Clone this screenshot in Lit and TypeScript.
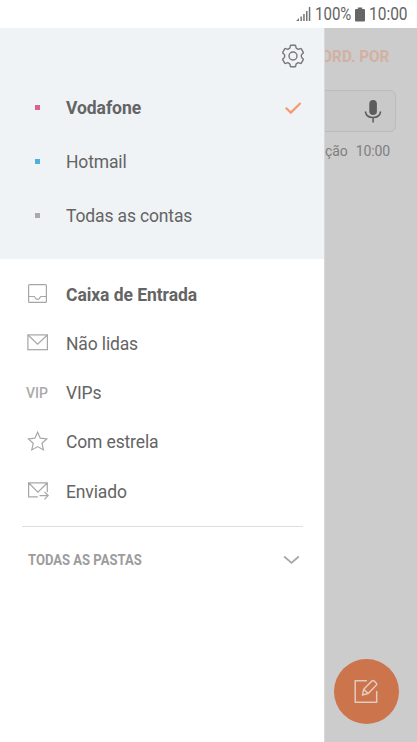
import { LitElement, html, css, svg } from "lit";
import { customElement } from "lit/decorators.js";

const accounts = [
  { name: "Vodafone", tone: "pink", selected: true },
  { name: "Hotmail", tone: "blue", selected: false },
  { name: "Todas as contas", tone: "grey", selected: false },
];

const icons = {
  inbox: svg`<rect x="3.6" y="3.6" width="17.8" height="17.8" rx="1"/><path d="M3.6 15.500h5.500c1 0 .9 2.800 3.400 2.800s2.400-2.800 3.400-2.800h5.500"/>`,
  mail: svg`<rect x="2.9" y="4.9" width="19.5" height="14.8"/><path d="M3 5l9.6 9.2L22.3 5"/>`,
  star: svg`<path d="M12.6 3.2l2.7 6 6.5.7-4.8 4.4 1.4 6.6-5.8-3.3-5.8 3.3 1.4-6.6-4.8-4.4 6.5-.7z"/>`,
  sent: svg`<path d="M12.8 18.9H3.6V4.8h18.7v9.4M3.8 5l9.1 9.1L22.2 5M14.5 17.6h8.6M19.4 13.8l3.8 3.8-3.8 3.8"/>`,
};

const folders = [
  { name: "Caixa de Entrada", icon: icons.inbox, selected: true },
  { name: "Não lidas", icon: icons.mail },
  { name: "VIPs", icon: null },
  { name: "Com estrela", icon: icons.star },
  { name: "Enviado", icon: icons.sent },
];

@customElement("status-bar")
export class StatusBar extends LitElement {
  static styles = css`
    :host {
      display: flex;
      justify-content: flex-end;
      align-items: center;
      height: 28px;
      padding-right: 9px;
      box-sizing: border-box;
      background: #fff;
      color: #646464;
      font-size: 17.5px;
      line-height: 28px;
    }
    .signal { width: 15px; height: 14px; margin-right: 4px; }
    .battery { width: 10px; height: 15px; margin: 0 4px 0 3px; }
    .fit { display: block; width: 39px; white-space: nowrap; }
    .fit span { display: inline-block; transform-origin: 0 50%; transform: scaleX(0.885); }
    .percent { width: 37px; }
    .percent span { transform: scaleX(0.86); }
  `;
  render() {
    return html`
      <svg class="signal" viewBox="0 0 15 14" fill="#757575">
        <path d="M0 14l3-3v3zM4.4 9.5h1.5V14H4.4zM7.2 7h1.5v7H7.2zM10 4h1.5v10H10zM12.8 0h1.5v14h-1.5z" />
      </svg>
      <div class="fit percent"><span>100%</span></div>
      <svg class="battery" viewBox="0 0 10 15" fill="#666">
        <path d="M2.8 .5h4.4v1.5H9q1 0 1 1V13.5q0 1-1 1H1q-1 0-1-1V3q0-1 1-1h1.8z" />
      </svg>
      <div class="fit"><span>10:00</span></div>
    `;
  }
}

@customElement("mail-page")
export class MailPage extends LitElement {
  static styles = css`
    :host {
      display: flex;
      flex-direction: column;
      align-items: flex-end;
      background: #ccc;
      color: #7f7f7f;
    }
    .sort {
      margin: 17px 28px 0 0;
      height: 22px;
      line-height: 22px;
      font-size: 17px;
      font-weight: 700;
      color: #d2b1a2;
      white-space: nowrap;
      transform-origin: 100% 50%;
      transform: scaleX(0.9);
    }
    .search {
      display: flex;
      justify-content: flex-end;
      align-items: center;
      box-sizing: border-box;
      width: 375px;
      height: 42px;
      margin: 23px 21px 0 0;
      padding-right: 13px;
      border: 1px solid #bbb;
      border-radius: 6px;
      background: #c9c9c9;
    }
    .search svg { width: 18px; height: 24px; }
    .sync {
      display: flex;
      gap: 8px;
      margin: 9px 27px 0 0;
      font-size: 14px;
      line-height: 20px;
      letter-spacing: -0.1px;
      white-space: nowrap;
    }
    .compose {
      position: absolute;
      right: 18.5px;
      bottom: 18.5px;
      display: flex;
      align-items: center;
      justify-content: center;
      width: 65px;
      height: 65px;
      border-radius: 50%;
      background: #cc744b;
    }
    .compose svg { width: 26px; height: 26px; }
  `;
  render() {
    return html`
      <div class="sort">ORD. POR</div>
      <div class="search">
        <svg viewBox="0 0 18 24" fill="none" stroke="#5c5c5c" stroke-width="1.5">
          <rect x="5.3" y="1" width="7.6" height="15" rx="3.8" fill="#5c5c5c" stroke="none" />
          <path d="M1.3 12.5C2 16.3 5 18.5 9 18.5s7-2.2 7.7-6M9.1 18.5V23.5" />
        </svg>
      </div>
      <div class="sync"><span>Última sincronização</span><span>10:00</span></div>
      <div class="compose">
        <svg viewBox="0 0 26 26" fill="none" stroke="#e3cabe" stroke-width="1.5" stroke-linejoin="round">
          <path d="M14 2.8H2.2v21.5h21.5V13" />
          <path d="M9.5 17l1.2-5.8 8.3-8.3q1-.9 2 0l2.4 2.3q.9.9 0 1.900l-8.200 8.500zM10.700 11.200l4.500 4.400" />
        </svg>
      </div>
    `;
  }
}

@customElement("mail-drawer")
export class MailDrawer extends LitElement {
  static styles = css`
    :host {
      display: block;
      background: #fff;
      color: #646464;
      font-size: 17.5px;
      box-shadow: 1px 0 0 #d8d8d8;
    }
    svg { display: block; fill: none; }
    .accounts { height: 231px; background: #eff3f6; }
    .settings {
      display: flex;
      justify-content: flex-end;
      height: 53px;
      box-sizing: border-box;
      padding: 16px 19px 0 0;
    }
    .settings svg { width: 24px; height: 24px; }
    .row {
      display: grid;
      grid-template-columns: 41px 1fr auto;
      align-items: center;
      height: 54px;
      padding: 0 22px 0 25px;
    }
    .folders { padding-top: 11px; }
    .folders .row { height: 49.25px; }
    .label { white-space: nowrap; letter-spacing: -0.14px; }
    .selected .label { font-weight: 700; letter-spacing: -0.06px; }
    .dot { width: 5px; height: 5px; margin-left: 10px; position: relative; top: -1px; }
    .pink { background: #de5f8b; }
    .blue { background: #4eb1dc; }
    .grey { background: #aaa; }
    .check { width: 18px; height: 14px; }
    .icon { width: 25px; height: 25px; margin-bottom: 2px; stroke: #a6a6a6; stroke-width: 1.2; }
    .vip { font-size: 14px; font-weight: 500; color: #aaa; padding: 0 0 1px 1px; }
    .divider { height: 1px; margin: 9.75px 21px 0 22px; background: #dedede; }
    .all {
      display: flex;
      justify-content: space-between;
      align-items: center;
      height: 66px;
      padding: 0 24px 0 28px;
    }
    .all span {
      font-size: 15px;
      font-weight: 700;
      color: #9c9c9c;
      white-space: nowrap;
      transform-origin: 0 50%;
      transform: scaleX(0.87);
    }
    .all svg { width: 17px; height: 10px; }
  `;
  render() {
    return html`
      <div class="accounts">
        <div class="settings">
          <svg viewBox="0 0 24 24" stroke="#777" stroke-width="1.4" stroke-linejoin="round">
            <path d="M10 1.300h4q.6 0 .7.600l.3 1.700q.1.500.6.800l1.200.7q.5.300 1 .1l1.600-.6q.6-.2.900.3l2 3.400q.3.500-.2.900l-1.300 1.100q-.4.300-.4.900v1.600q0 .6.400.9l1.300 1.100q.5.400.2.900l-2 3.400q-.3.500-.9.300l-1.600-.6q-.5-.2-1 .1l-1.200.7q-.5.300-.6.800l-.3 1.700q-.1.600-.7.600h-4q-.6 0-.7-.6l-.3-1.700q-.1-.5-.6-.8l-1.200-.7q-.5-.3-1-.1l-1.600.6q-.6.200-.9-.3l-2-3.400q-.3-.5.2-.9l1.300-1.100q.4-.3.400-.9v-1.600q0-.6-.4-.9L1.900 9.200q-.5-.4-.2-.9l2-3.400q.3-.5.9-.3l1.600.6q.5.200 1-.1l1.200-.7q.5-.3.600-.8l.3-1.700q.1-.6.700-.6z" />
            <circle cx="12" cy="12" r="4" />
          </svg>
        </div>
        ${accounts.map(
          (a) => html`
            <div class="row ${a.selected ? "selected" : ""}">
              <div class="dot ${a.tone}"></div>
              <span class="label">${a.name}</span>
              ${a.selected
                ? html`<svg class="check" viewBox="0 0 18 14" stroke="#f79a72" stroke-width="2.2"><path d="M1.8 6.8l5 4.8L16.6 2" /></svg>`
                : ""}
            </div>
          `,
        )}
      </div>
      <div class="folders">
        ${folders.map(
          (f) => html`
            <div class="row ${f.selected ? "selected" : ""}">
              ${f.icon
                ? html`<svg class="icon" viewBox="0 0 25 25">${f.icon}</svg>`
                : html`<span class="vip">VIP</span>`}
              <span class="label">${f.name}</span>
            </div>
          `,
        )}
      </div>
      <div class="divider"></div>
      <div class="all">
        <span>TODAS AS PASTAS</span>
        <svg viewBox="0 0 17 10" stroke="#a6a6a6" stroke-width="1.7"><path d="M1.2 1.5l7.3 6.3 7.3-6.3" /></svg>
      </div>
    `;
  }
}

@customElement("app-root")
export class AppRoot extends LitElement {
  static styles = css`
    :host {
      display: flex;
      flex-direction: column;
      height: 742px;
      overflow: hidden;
      font-family: Roboto, "Liberation Sans", sans-serif;
    }
    .stage { position: relative; flex: 1; display: flex; }
    mail-page { flex: 1; }
    mail-drawer {
      position: absolute;
      top: 0;
      bottom: 0;
      left: 0;
      width: 324px;
    }
  `;
  render() {
    return html`
      <status-bar></status-bar>
      <div class="stage">
        <mail-page></mail-page>
        <mail-drawer></mail-drawer>
      </div>
    `;
  }
}
